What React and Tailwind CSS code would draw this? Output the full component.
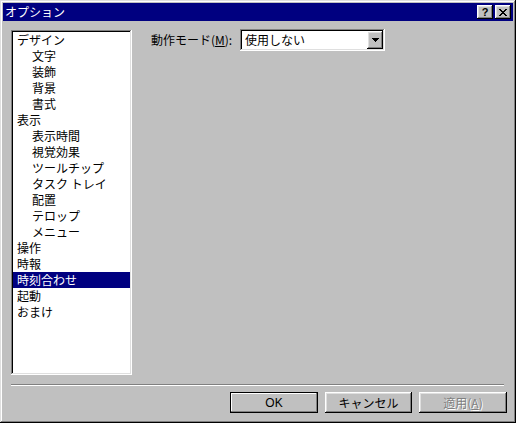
import React from "react";

const raised =
  "shadow-[inset_-1px_-1px_#000,inset_1px_1px_#fff,inset_-2px_-2px_#808080,inset_2px_2px_#dfdfdf]";
const sunken =
  "shadow-[inset_-1px_-1px_#fff,inset_1px_1px_#808080,inset_-2px_-2px_#dfdfdf,inset_2px_2px_#000]";

const items = [
  ["デザイン", 0],
  ["文字", 1],
  ["装飾", 1],
  ["背景", 1],
  ["書式", 1],
  ["表示", 0],
  ["表示時間", 1],
  ["視覚効果", 1],
  ["ツールチップ", 1],
  ["タスク トレイ", 1],
  ["配置", 1],
  ["テロップ", 1],
  ["メニュー", 1],
  ["操作", 0],
  ["時報", 0],
  ["時刻合わせ", 0, true],
  ["起動", 0],
  ["おまけ", 0],
];

export default function App() {
  return (
    <div
      className={`w-[516px] h-[423px] bg-[#c0c0c0] p-[3px] flex flex-col text-[12px] leading-[16px] text-black shadow-[inset_-1px_-1px_#000,inset_1px_1px_#dfdfdf,inset_-2px_-2px_#808080,inset_2px_2px_#fff]`}
      style={{ fontFamily: '"Noto Sans CJK JP", "Noto Sans", sans-serif' }}
    >
      {/* Title bar */}
      <div className="h-[18px] bg-[#000080] flex items-center pl-[2px] pr-[2px] shrink-0">
        <span className="text-white text-[12px] leading-[16px] flex-1">オプション</span>
        <div className="flex gap-[2px]">
          <div className={`w-[16px] h-[14px] bg-[#c0c0c0] ${raised} flex items-center justify-center`}>
            <span className="font-bold text-[11px] leading-[11px] text-black" style={{ fontFamily: '"Liberation Sans", sans-serif' }}>?</span>
          </div>
          <div className={`w-[16px] h-[14px] bg-[#c0c0c0] ${raised} flex items-center justify-center`}>
            <svg width="8" height="7" viewBox="0 0 8 7" shapeRendering="crispEdges">
              <path d="M0 0h2v1H0zM6 0h2v1H6zM1 1h2v1H1zM5 1h2v1H5zM2 2h4v1H2zM3 3h2v1H3zM2 4h4v1H2zM1 5h2v1H1zM5 5h2v1H5zM0 6h2v1H0zM6 6h2v1H6z" fill="#000" />
            </svg>
          </div>
        </div>
      </div>

      {/* Body */}
      <div className="flex flex-col pl-[8px] pt-[8px]">
        <div className="flex items-start">
          <div className={`mt-[1px] w-[121px] h-[345px] bg-white p-[2px] ${sunken}`}>
            <div className="flex flex-col">
              {items.map(([label, level, sel]) => (
                <div
                  key={label}
                  className={`h-[16px] leading-[16px] whitespace-nowrap ${level ? "pl-[19px]" : "pl-[4px]"} ${sel ? "bg-[#000080] text-white" : ""}`}
                >
                  {label}
                </div>
              ))}
            </div>
          </div>

          <div className="ml-[19px] flex items-center h-[22px]">
            <div className="w-[89px] whitespace-nowrap">
              動作モード(<span className="underline">M</span>):
            </div>
            <div className={`w-[145px] h-[22px] bg-white p-[2px] flex ${sunken}`}>
              <div className="flex-1 pl-[3px] leading-[18px] whitespace-nowrap">使用しない</div>
              <div className={`w-[16px] h-[18px] bg-[#c0c0c0] ${raised} flex items-center justify-center`}>
                <svg width="7" height="4" viewBox="0 0 7 4" shapeRendering="crispEdges">
                  <path d="M0 0h7v1H0zM1 1h5v1H1zM2 2h3v1H2zM3 3h1v1H3z" fill="#000" />
                </svg>
              </div>
            </div>
          </div>
        </div>

        {/* Separator */}
        <div className="mt-[9px] w-[493px] h-[2px] border-t border-t-[#808080] border-b border-b-white" />

        {/* Buttons */}
        <div className="mt-[6px] ml-[219px] flex gap-[7px]">
          <div className="w-[88px] h-[21px] bg-[#c0c0c0] flex items-center justify-center shadow-[inset_0_0_0_1px_#000,inset_-2px_-2px_#808080,inset_2px_2px_#fff]" style={{ fontFamily: '"Liberation Sans", sans-serif' }}>
            OK
          </div>
          <div className={`w-[87px] h-[21px] bg-[#c0c0c0] flex items-center justify-center ${raised}`}>
            キャンセル
          </div>
          <div className={`w-[88px] h-[21px] bg-[#c0c0c0] flex items-center justify-center ${raised} text-[#808080] [text-shadow:1px_1px_0_#fff]`}>
            適用(<span className="underline">A</span>)
          </div>
        </div>
      </div>
    </div>
  );
}
